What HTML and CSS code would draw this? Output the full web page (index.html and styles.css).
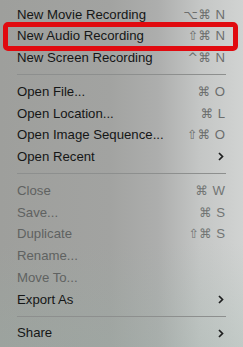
FILE: index.html
```html
<!DOCTYPE html>
<html lang="en">
<head>
    <meta charset="UTF-8">
    <meta name="viewport" content="width=device-width, initial-scale=1.0">
    <title>File Menu</title>
    <link rel="stylesheet" href="styles.css">
</head>
<body>
    <div class="menu">
        <div class="item"><span>New Movie Recording</span><span class="keys">⌥⌘<b>N</b></span></div>
        <div class="item marked"><span>New Audio Recording</span><span class="keys">⇧⌘<b>N</b></span></div>
        <div class="item"><span>New Screen Recording</span><span class="keys">^⌘<b>N</b></span></div>
        <div class="sep"></div>
        <div class="item"><span>Open File...</span><span class="keys">⌘<b>O</b></span></div>
        <div class="item"><span>Open Location...</span><span class="keys">⌘<b>L</b></span></div>
        <div class="item"><span>Open Image Sequence...</span><span class="keys">⇧⌘<b>O</b></span></div>
        <div class="item"><span>Open Recent</span>
            <svg class="chev" width="6" height="9" viewBox="0 0 6 9"><path d="M1 1l3.5 3.5L1 8" fill="none" stroke="#1e1f1f" stroke-width="1.7"/></svg>
        </div>
        <div class="sep"></div>
        <div class="item off"><span>Close</span><span class="keys">⌘<b>W</b></span></div>
        <div class="item off"><span>Save...</span><span class="keys">⌘<b>S</b></span></div>
        <div class="item off"><span>Duplicate</span><span class="keys">⇧⌘<b>S</b></span></div>
        <div class="item off"><span>Rename...</span></div>
        <div class="item off"><span>Move To...</span></div>
        <div class="item"><span>Export As</span>
            <svg class="chev" width="6" height="9" viewBox="0 0 6 9"><path d="M1 1l3.5 3.5L1 8" fill="none" stroke="#1e1f1f" stroke-width="1.7"/></svg>
        </div>
        <div class="sep"></div>
        <div class="item"><span>Share</span>
            <svg class="chev" width="6" height="9" viewBox="0 0 6 9"><path d="M1 1l3.5 3.5L1 8" fill="none" stroke="#1e1f1f" stroke-width="1.7"/></svg>
        </div>
    </div>
</body>
</html>
```

FILE: styles.css
```css
* { box-sizing: border-box; margin: 0; padding: 0; }
html, body {
    height: 100%;
}
body {
    font-family: "Liberation Sans", Arial, sans-serif;
    font-size: 13.2px;
    color: #151616;
    overflow: hidden;
    background:
        linear-gradient(0deg, rgba(150, 175, 165, 0.25) 0%, rgba(150, 175, 165, 0) 30%),
        linear-gradient(90deg, #9e9f9c 0%, #a2a3a1 45%, #adaead 65%, #c4c6c5 82%, #d1d3d2 100%);
}
.menu {
    padding: 3.6px 18px 0 17px;
}
.item {
    display: flex;
    justify-content: space-between;
    align-items: center;
    height: 21.75px;
    line-height: 21.75px;
    white-space: nowrap;
}
.item.off {
    color: #5f6261;
}
.keys {
    font-family: "DejaVu Sans", sans-serif;
    font-size: 12.5px;
    color: #6c6e6d;
    letter-spacing: 0.5px;
}
.keys b {
    font-family: "Liberation Sans", Arial, sans-serif;
    font-size: 13.2px;
    font-weight: 400;
    margin-left: 4px;
    letter-spacing: 0;
}
.off .keys {
    color: #727574;
}
.chev {
    margin-right: 1px;
}
.sep {
    height: 1px;
    background: #8d8f8e;
    margin: 5.4px -1px 5.6px 0;
}
.marked {
    position: relative;
}
.marked::after {
    content: "";
    position: absolute;
    left: -14px;
    right: -13px;
    top: -3.5px;
    bottom: -3.9px;
    border: 5.5px solid #e10a0f;
    border-radius: 5px;
}
```
